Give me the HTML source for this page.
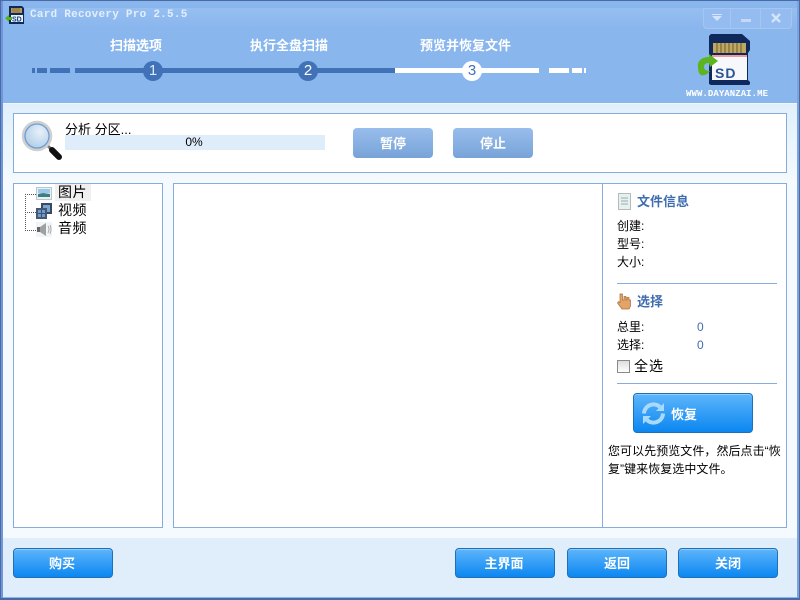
<!DOCTYPE html>
<html lang="zh"><head><meta charset="utf-8"><title>Card Recovery Pro</title>
<style>
*{box-sizing:border-box}
html,body{margin:0;padding:0;width:800px;height:600px;overflow:hidden;background:#8ab6ee}
body{position:relative;font-family:"Liberation Sans","WenQuanYi Zen Hei","Noto Sans CJK SC",sans-serif;font-size:13px;color:#000}
.a{position:absolute}
.t{position:absolute;white-space:nowrap;line-height:16px}
.panel{position:absolute;background:#fff;border:1px solid #86acdc}
.btn{position:absolute;width:100px;height:30px;border:1px solid #1f70ba;border-radius:4px;background:linear-gradient(#5db5fb,#0b87f1);color:#fff;font-weight:bold;font-size:13px;text-align:center;line-height:30px;box-shadow:inset 0 1px 0 #8fcdfd}
.gbtn{position:absolute;width:80px;height:30px;border-radius:4px;background:linear-gradient(#98bdec,#78a3d8);color:#fff;font-weight:bold;font-size:13px;text-align:center;line-height:32px}
.dot{position:absolute;width:20px;height:20px;border-radius:50%;text-align:center;line-height:20px;font-size:15px;top:61px}
.seg{position:absolute;height:5px;top:68px}
.b{background:#4172b8}.w{background:#fff}
.stp{position:absolute;top:38px;color:#fff;font-weight:bold;font-size:13px;line-height:16px;white-space:nowrap}
.h{position:absolute;color:#3f6db0;font-weight:bold;font-size:13px;line-height:16px;white-space:nowrap}
.hr{position:absolute;left:617px;width:160px;height:1px;background:#86acdc}
.n{position:absolute;left:697px;color:#3f6db0;font-size:12px;line-height:14px}
</style></head><body>
<div class="a" style="left:0;top:0;width:800px;height:600px;border:1px solid #4a6aa6;border-width:1px 1px 2px 1px"></div>
<div class="a" style="left:1px;top:1px;width:798px;height:102px;background:#8ab6ee"></div>
<div class="a" style="left:1px;top:1px;width:2px;height:597px;background:#6e96d8"></div>
<div class="a" style="left:797px;top:1px;width:2px;height:597px;background:#7ba3de"></div>
<div class="a" style="left:25px;top:8px;width:772px;height:20px;background:linear-gradient(#96bff1,#8ab6ee)"></div>

<svg class="a" style="left:4px;top:5px" width="21" height="20" viewBox="0 0 21 20">
<path d="M5 1h13l2 2v16H5z" fill="#10295c"/><rect x="7" y="3" width="11" height="5" fill="#b89a50"/><path d="M9 3v5M11 3v5M13 3v5M15 3v5" stroke="#6c5a30" stroke-width=".6"/><rect x="7" y="10" width="12" height="7" fill="#e8f0fa"/>
<path d="M1 13l4-3v2h3v3H5v2z" fill="#54b020"/>
<text x="8" y="16.5" font-size="7" font-weight="bold" font-family="Liberation Sans" fill="#15407c">SD</text></svg>
<div class="t" style="left:30px;top:7px;color:#e3eefc;font:bold 11px/16px 'Liberation Mono',monospace;letter-spacing:.25px">Card Recovery Pro 2.5.5</div>

<div class="a" style="left:703px;top:8px;width:89px;height:21px;border:1px solid #a6c6ef;border-radius:0 0 4px 4px;background:#94bcf0"></div>
<div class="a" style="left:730px;top:8px;width:1px;height:20px;background:#a6c6ef"></div>
<div class="a" style="left:760px;top:8px;width:1px;height:20px;background:#a6c6ef"></div>
<div class="a" style="left:712px;top:14px;width:10px;height:1px;background:#d4e3f8"></div>
<div class="a" style="left:712px;top:16px;width:0;height:0;border:5px solid transparent;border-top:5px solid #d4e3f8"></div>
<div class="a" style="left:741px;top:19px;width:10px;height:3px;background:#c5d9f5"></div>
<svg class="a" style="left:771px;top:13px" width="10" height="10" viewBox="0 0 10 10"><path d="M1 1l8 8M9 1l-8 8" stroke="#d4e3f8" stroke-width="2.4"/></svg>

<div class="stp" style="left:110px">扫描选项</div>
<div class="stp" style="left:250px">执行全盘扫描</div>
<div class="stp" style="left:420px">预览并恢复文件</div>
<div class="seg b" style="left:32px;width:3px"></div>
<div class="seg b" style="left:37px;width:10px"></div>
<div class="seg b" style="left:50px;width:20px"></div>
<div class="seg b" style="left:75px;width:320px"></div>
<div class="seg w" style="left:395px;width:144px"></div>
<div class="seg w" style="left:549px;width:20px"></div>
<div class="seg w" style="left:572px;width:10px"></div>
<div class="seg w" style="left:584px;width:2px"></div>
<div class="dot b" style="left:143px;color:#dce9fa">1</div>
<div class="dot b" style="left:298px;color:#fff">2</div>
<div class="dot w" style="left:462px;color:#4172b8">3</div>

<svg class="a" style="left:696px;top:33px" width="56" height="54" viewBox="0 0 56 54">
<path d="M15 1h31l8 7v9l-2 3v27l2 2v2l-1 1H15l-2-1V3z" fill="#10295c"/>
<rect x="17" y="10" width="33" height="10" fill="#c1a860"/>
<path d="M21 10v10M25 10v10M29 10v10M33 10v10M37 10v10M41 10v10M45 10v10" stroke="#6c5a30"/>
<rect x="16" y="22" width="35" height="25" fill="#f6f8fb"/><rect x="16" y="22" width="35" height="2" fill="#f09a9a"/>
<text x="19" y="45" font-size="14" font-weight="bold" font-family="Liberation Sans" fill="#2a5592" letter-spacing="1">SD</text>
<path d="M2 34c-1-7 5-10 11-10v-3l9 7-8 6-1-4c-3 0-5 1-5 4 0 3 3 4 6 4-3 4-7 5-9 4-2-1-3-4-3-8z" fill="#5cb51e"/>
</svg>
<div class="t" style="left:686px;top:87px;color:#fff;font:bold 9px/14px 'Liberation Mono',monospace;letter-spacing:.07px">WWW.DAYANZAI.ME</div>

<div class="a" style="left:3px;top:103px;width:794px;height:435px;background:linear-gradient(#e0f0fb 0,#f5fafe 80px);border-top:1px solid #eef6fd"></div>
<div class="a" style="left:3px;top:538px;width:794px;height:59px;background:#e0eefb"></div>

<div class="panel" style="left:13px;top:113px;width:774px;height:60px"></div>
<svg class="a" style="left:21px;top:120px" width="44" height="42" viewBox="0 0 44 42">
<defs><radialGradient id="g" cx=".6" cy=".35" r=".7"><stop offset="0" stop-color="#e8f1f9"/><stop offset="1" stop-color="#a9c8e6"/></radialGradient></defs>
<path d="M27 26l3 3" stroke="#777" stroke-width="3"/>
<path d="M31 30l7 7" stroke="#111" stroke-width="6" stroke-linecap="round"/>
<circle cx="16" cy="16" r="14" fill="url(#g)" stroke="#cfcfcf" stroke-width="2.5"/>
<circle cx="16" cy="16" r="12" fill="none" stroke="#6f9ed0" stroke-width="1.3"/>
</svg>
<div class="t" style="left:65px;top:122px">分析 分区...</div>
<div class="a" style="left:65px;top:135px;width:260px;height:15px;background:#dfedfb"></div>
<div class="t" style="left:65px;top:135px;width:258px;text-align:center;font-size:12px;line-height:15px">0%</div>
<div class="gbtn" style="left:353px;top:128px">暂停</div>
<div class="gbtn" style="left:453px;top:128px">停止</div>

<div class="panel" style="left:13px;top:183px;width:150px;height:345px"></div>
<div class="panel" style="left:173px;top:183px;width:614px;height:345px"></div>
<div class="a" style="left:602px;top:184px;width:1px;height:343px;background:#86acdc"></div>

<div class="a" style="left:25px;top:194px;width:1px;height:37px;border-left:1px dotted #555"></div>
<div class="a" style="left:25px;top:194px;width:11px;border-top:1px dotted #555"></div>
<div class="a" style="left:25px;top:212px;width:11px;border-top:1px dotted #555"></div>
<div class="a" style="left:25px;top:230px;width:11px;border-top:1px dotted #555"></div>
<div class="a" style="left:55px;top:184px;width:36px;height:17px;background:#f0f0f0"></div>
<svg class="a" style="left:36px;top:187px" width="16" height="13" viewBox="0 0 16 13"><rect x=".5" y=".5" width="15" height="12" fill="#e8f0f0" stroke="#b8c8cc"/><rect x="2" y="2" width="12" height="4" fill="#9cc8ec"/><path d="M2 7l5-1 7 1v3H2z" fill="#3b7f84"/></svg>
<svg class="a" style="left:36px;top:203px" width="16" height="16" viewBox="0 0 16 16"><rect x="5" y="0" width="11" height="11" fill="#3a4a5c"/><rect x="7" y="2" width="7" height="7" fill="#7aa6d2"/><rect x="0" y="5" width="11" height="11" fill="#445a74"/><rect x="2" y="7" width="7" height="7" fill="#6f9ccc"/><path d="M5.5 7v7M2 10.5h7" stroke="#3c5470"/></svg>
<svg class="a" style="left:36px;top:222px" width="16" height="15" viewBox="0 0 16 15"><rect width="16" height="15" fill="#f0f5f8"/><path d="M1 5h3l6-4v13l-6-4H1z" fill="#a0a0a0"/><path d="M1 5h3v5H1z" fill="#666"/><path d="M12 4q2 3 0 7M14 3q2 4 0 9" stroke="#aaa" fill="none"/></svg>
<div class="t" style="left:58px;top:184px;font-size:14px;line-height:17px;letter-spacing:.5px">图片</div>
<div class="t" style="left:58px;top:202px;font-size:14px;line-height:17px;letter-spacing:.5px">视频</div>
<div class="t" style="left:58px;top:220px;font-size:14px;line-height:17px;letter-spacing:.5px">音频</div>

<svg class="a" style="left:618px;top:193px" width="13" height="17" viewBox="0 0 13 17"><rect x=".5" y=".5" width="12" height="16" fill="#e6f0ec" stroke="#b4bcb8"/><path d="M3 5h7M3 8h7M3 11h7" stroke="#9ab"/></svg>
<div class="h" style="left:637px;top:194px">文件信息</div>
<div class="t" style="left:617px;top:218px;font-size:12px">创建:</div>
<div class="t" style="left:617px;top:236px;font-size:12px">型号:</div>
<div class="t" style="left:617px;top:254px;font-size:12px">大小:</div>
<div class="hr" style="top:283px"></div>
<svg class="a" style="left:617px;top:293px" width="14" height="17" viewBox="0 0 14 17"><path d="M3 1h2.5v6H7V3.5h2V7h1V4.5h2V7h1.5v6L12 16H5L.5 10l1.2-1.5L3 9.5z" fill="#e2a468" stroke="#a86c34" stroke-width=".7"/></svg>
<div class="h" style="left:637px;top:294px">选择</div>
<div class="t" style="left:617px;top:319px;font-size:12px">总里:</div>
<div class="t" style="left:617px;top:337px;font-size:12px">选择:</div>
<div class="n" style="top:320px">0</div>
<div class="n" style="top:338px">0</div>
<div class="a" style="left:617px;top:360px;width:13px;height:13px;border:1px solid #8a8a8a;background:linear-gradient(#dedede,#fff)"></div>
<div class="t" style="left:634px;top:358px;font-size:14px;line-height:17px;letter-spacing:1px">全选</div>
<div class="hr" style="top:383px"></div>

<div class="btn" style="left:633px;top:393px;width:120px;height:40px;line-height:42px;text-align:left;padding-left:37px">恢复</div>
<svg class="a" style="left:641px;top:401px" width="25" height="25" viewBox="0 0 25 25" fill="none"><path d="M3 12.5A9.5 9.5 0 0 1 19 6" stroke="#a8dafc" stroke-width="4"/><path d="M23 2v8h-8z" fill="#a8dafc"/><path d="M22 12.5A9.5 9.5 0 0 1 6 19" stroke="#a8dafc" stroke-width="4"/><path d="M2 23v-8h8z" fill="#a8dafc"/></svg>
<div class="t" style="left:608px;top:442px;font-size:12px;line-height:18px;width:175px;white-space:normal;letter-spacing:.05px">您可以先预览文件，然后点击“恢复”键来恢复选中文件。</div>

<div class="btn" style="left:13px;top:548px;padding-right:2px">购买</div>
<div class="btn" style="left:455px;top:548px;padding-right:2px">主界面</div>
<div class="btn" style="left:567px;top:548px">返回</div>
<div class="btn" style="left:678px;top:548px">关闭</div>
</body></html>
